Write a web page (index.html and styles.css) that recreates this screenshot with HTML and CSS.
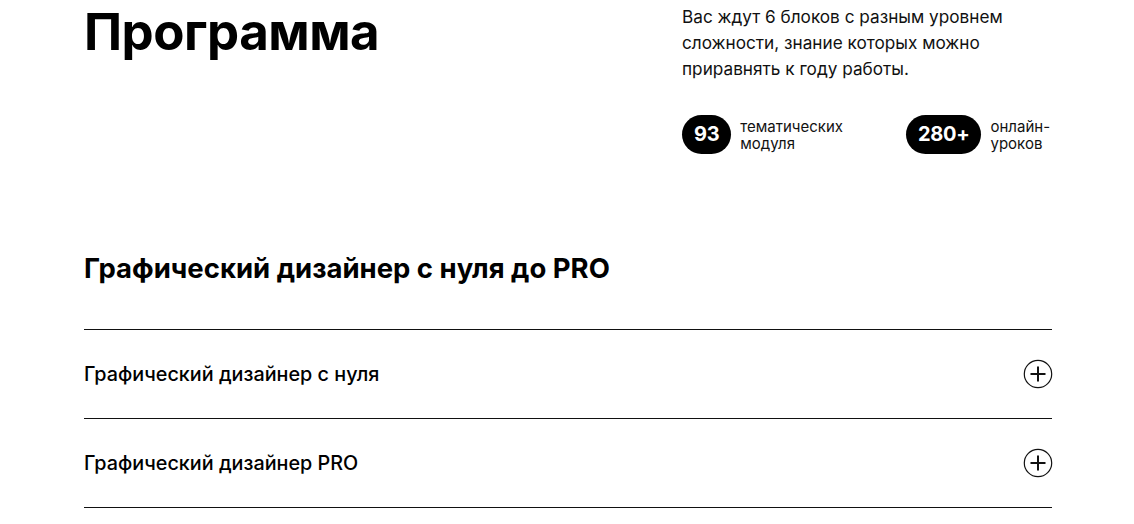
FILE: index.html
```html
<!DOCTYPE html>
<html lang="ru">
<head>
<meta charset="utf-8">
<link rel="stylesheet" href="styles.css">
</head>
<body>
<div class="page">
  <section class="top">
    <h1 class="title">Программа</h1>
    <div class="info">
      <p class="lead">Вас ждут 6 блоков с разным уровнем сложности, знание которых можно приравнять к году работы.</p>
      <div class="stats">
        <div class="stat stat-first">
          <span class="pill">93</span>
          <span class="label">тематических<br>модуля</span>
        </div>
        <div class="stat">
          <span class="pill">280+</span>
          <span class="label">онлайн-<br>уроков</span>
        </div>
      </div>
    </div>
  </section>
  <h2 class="course">Графический дизайнер с нуля до PRO</h2>
  <div class="list">
    <div class="row">
      <span class="row-title">Графический дизайнер с нуля</span>
      <svg class="plus" width="30" height="30" viewBox="0 0 30 30"><circle cx="15" cy="15" r="13.7" fill="none" stroke="#111" stroke-width="1.2"/><path d="M15 7.5v15M7.5 15h15" stroke="#111" stroke-width="2" fill="none"/></svg>
    </div>
    <div class="row">
      <span class="row-title">Графический дизайнер PRO</span>
      <svg class="plus" width="30" height="30" viewBox="0 0 30 30"><circle cx="15" cy="15" r="13.7" fill="none" stroke="#111" stroke-width="1.2"/><path d="M15 7.5v15M7.5 15h15" stroke="#111" stroke-width="2" fill="none"/></svg>
    </div>
  </div>
</div>
</body>
</html>
```

FILE: styles.css
```css
html, body {
  margin: 0;
  padding: 0;
  background: #fff;
}
body {
  font-family: Inter, "Noto Sans", Arial, sans-serif;
  color: #000;
}
.page {
  width: 968px;
  margin-left: 84px;
}
.top {
  display: flex;
  align-items: flex-start;
}
.title {
  margin: 0;
  width: 598px;
  font-size: 51px;
  font-weight: 700;
  line-height: 64px;
  letter-spacing: -0.5px;
}
.info {
  width: 370px;
  padding-top: 4px;
}
.lead {
  margin: 0;
  font-size: 17.2px;
  line-height: 26px;
  color: #111;
}
.stats {
  display: flex;
  margin-top: 33px;
}
.stat {
  display: flex;
  align-items: center;
}
.stat-first {
  width: 224px;
}
.pill {
  background: #000;
  color: #fff;
  font-weight: 700;
  font-size: 20px;
  height: 39px;
  line-height: 39px;
  padding: 0 12px;
  border-radius: 20px;
  letter-spacing: -0.3px;
}
.label {
  margin-left: 9px;
  font-size: 15px;
  line-height: 17px;
  padding-top: 1px;
  color: #111;
}
.course {
  margin: 98px 0 0;
  font-size: 27.5px;
  font-weight: 700;
  line-height: 32px;
  letter-spacing: 0;
}
.list {
  margin-top: 45px;
  border-top: 1px solid #111;
}
.row {
  display: flex;
  align-items: center;
  justify-content: space-between;
  height: 88px;
  border-bottom: 1px solid #111;
}
.row-title {
  font-size: 19.8px;
  font-weight: 500;
  letter-spacing: 0;
}
.plus {
  margin-right: -1px;
}
```
